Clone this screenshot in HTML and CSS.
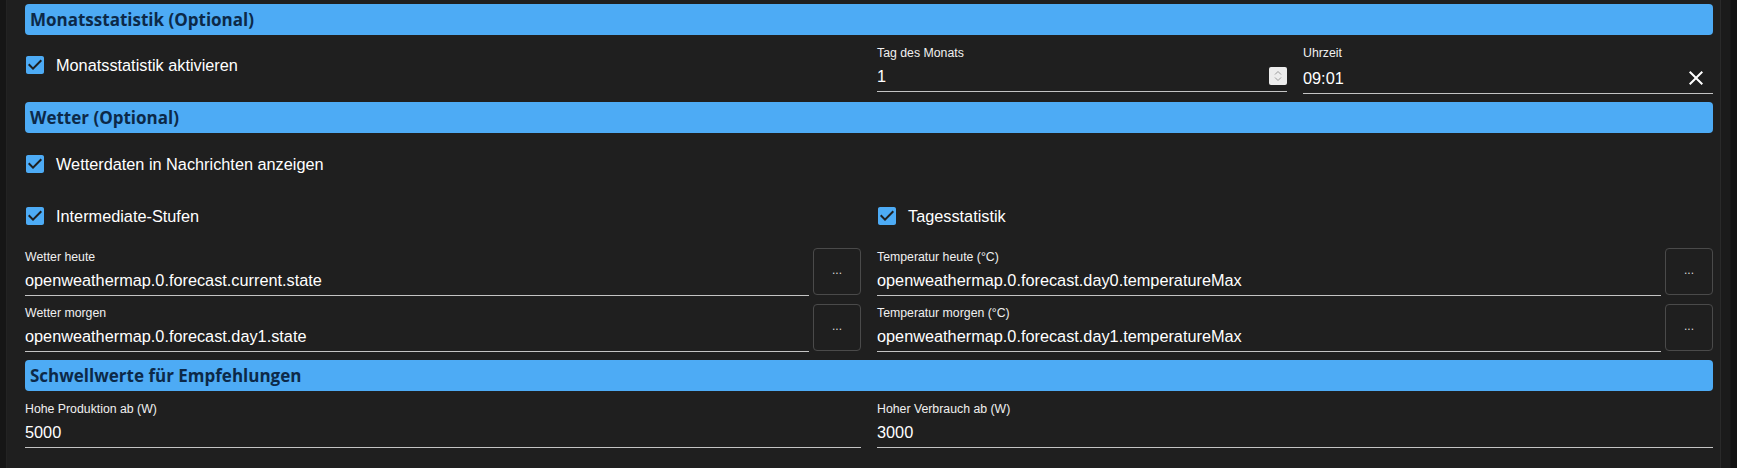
FILE: index.html
```html
<!DOCTYPE html>
<html lang="de">
<head>
<meta charset="utf-8">
<title>Einstellungen</title>
<link rel="stylesheet" href="styles.css">
</head>
<body>
<div class="app">
  <div class="edge-left"></div>
  <main class="content">
    <h2 class="section-title">Monatsstatistik (Optional)</h2>
    <div class="row-month">
      <label class="check">
        <svg class="check-icon" viewBox="0 0 24 24"><path d="M19 3H5c-1.11 0-2 .9-2 2v14c0 1.1.89 2 2 2h14c1.11 0 2-.9 2-2V5c0-1.1-.89-2-2-2zm-9 14l-5-5 1.41-1.41L10 14.17l7.59-7.59L19 8l-9 9z"/></svg>
        <span class="check-text">Monatsstatistik aktivieren</span>
      </label>
      <div class="field">
        <div class="field-label">Tag des Monats</div>
        <div class="field-value">
          <span>1</span>
          <span class="spinner">
            <svg viewBox="0 0 18 18"><path d="M6 7.5 9 4.5 12 7.5M6 10.5 9 13.5 12 10.5" fill="none" stroke="#9a9a9a" stroke-width="1"/></svg>
          </span>
        </div>
      </div>
      <div class="field field-time">
        <div class="field-label">Uhrzeit</div>
        <div class="field-value">
          <span>09:01</span>
          <svg class="clear-icon" viewBox="0 0 24 24"><path d="M19 6.41 17.59 5 12 10.59 6.41 5 5 6.41 10.59 12 5 17.59 6.41 19 12 13.41 17.59 19 19 17.59 13.41 12z"/></svg>
        </div>
      </div>
    </div>

    <h2 class="section-title section-gap">Wetter (Optional)</h2>
    <div class="check-row">
      <label class="check">
        <svg class="check-icon" viewBox="0 0 24 24"><path d="M19 3H5c-1.11 0-2 .9-2 2v14c0 1.1.89 2 2 2h14c1.11 0 2-.9 2-2V5c0-1.1-.89-2-2-2zm-9 14l-5-5 1.41-1.41L10 14.17l7.59-7.59L19 8l-9 9z"/></svg>
        <span class="check-text">Wetterdaten in Nachrichten anzeigen</span>
      </label>
    </div>
    <div class="two-col check-row">
      <label class="check">
        <svg class="check-icon" viewBox="0 0 24 24"><path d="M19 3H5c-1.11 0-2 .9-2 2v14c0 1.1.89 2 2 2h14c1.11 0 2-.9 2-2V5c0-1.1-.89-2-2-2zm-9 14l-5-5 1.41-1.41L10 14.17l7.59-7.59L19 8l-9 9z"/></svg>
        <span class="check-text">Intermediate-Stufen</span>
      </label>
      <label class="check">
        <svg class="check-icon" viewBox="0 0 24 24"><path d="M19 3H5c-1.11 0-2 .9-2 2v14c0 1.1.89 2 2 2h14c1.11 0 2-.9 2-2V5c0-1.1-.89-2-2-2zm-9 14l-5-5 1.41-1.41L10 14.17l7.59-7.59L19 8l-9 9z"/></svg>
        <span class="check-text">Tagesstatistik</span>
      </label>
    </div>
    <div class="two-col fields-grid">
      <div class="picker">
        <div class="field">
          <div class="field-label">Wetter heute</div>
          <div class="field-value"><span>openweathermap.0.forecast.current.state</span></div>
        </div>
        <button class="pick-btn" type="button">...</button>
      </div>
      <div class="picker">
        <div class="field">
          <div class="field-label">Temperatur heute (°C)</div>
          <div class="field-value"><span>openweathermap.0.forecast.day0.temperatureMax</span></div>
        </div>
        <button class="pick-btn" type="button">...</button>
      </div>
      <div class="picker">
        <div class="field">
          <div class="field-label">Wetter morgen</div>
          <div class="field-value"><span>openweathermap.0.forecast.day1.state</span></div>
        </div>
        <button class="pick-btn" type="button">...</button>
      </div>
      <div class="picker">
        <div class="field">
          <div class="field-label">Temperatur morgen (°C)</div>
          <div class="field-value"><span>openweathermap.0.forecast.day1.temperatureMax</span></div>
        </div>
        <button class="pick-btn" type="button">...</button>
      </div>
    </div>

    <h2 class="section-title section-gap">Schwellwerte für Empfehlungen</h2>
    <div class="two-col last-row">
      <div class="field">
        <div class="field-label">Hohe Produktion ab (W)</div>
        <div class="field-value"><span>5000</span></div>
      </div>
      <div class="field">
        <div class="field-label">Hoher Verbrauch ab (W)</div>
        <div class="field-value"><span>3000</span></div>
      </div>
    </div>
  </main>
  <div class="edge-right"></div>
</div>
</body>
</html>
```

FILE: styles.css
```css
* { box-sizing: border-box; }

html, body {
  margin: 0;
  height: 100%;
  background: #1f1f1f;
}

body {
  font-family: "Liberation Sans", Arial, sans-serif;
  color: #ffffff;
  overflow: hidden;
}

.app {
  display: flex;
  width: 1737px;
  height: 468px;
}

.edge-left {
  width: 7px;
  background: #161616;
  border-right: 1px solid #232323;
}

.edge-right {
  width: 17px;
  background: linear-gradient(to right, #1b1b1b 0, #1b1b1b 9px, #121212 10px);
  border-left: 1px solid #2a2a2a;
}

.content {
  flex: 1;
  padding: 4px 7px 0 18px;
}

.section-title {
  margin: 0;
  height: 31px;
  line-height: 31px;
  padding: 0 5px;
  background: #4dabf5;
  border-radius: 4px;
  color: #0c2948;
  font-family: "Open Sans", "Liberation Sans", sans-serif;
  font-weight: 700;
  font-size: 17px;
  white-space: nowrap;
}

.section-gap { margin-top: 8px; }

.row-month {
  display: grid;
  grid-template-columns: calc((100% - 16px) / 2) 1fr 1fr;
  column-gap: 16px;
  align-items: start;
  margin-top: 9px;
}

.two-col {
  display: grid;
  grid-template-columns: 1fr 1fr;
  column-gap: 16px;
}

.check-row { margin-top: 10px; }

.check {
  display: flex;
  align-items: center;
  height: 42px;
  margin-left: -2px;
  gap: 9px;
}

.check-icon {
  width: 24px;
  height: 24px;
  fill: #4dabf5;
  flex: none;
}

.check-text {
  font-size: 16.3px;
  color: #ffffff;
  white-space: nowrap;
}

.field {
  display: flex;
  flex-direction: column;
  padding-top: 2px;
  border-bottom: 1px solid #c4c4c4;
  min-width: 0;
}

.field-label {
  font-size: 12.3px;
  line-height: 14px;
  color: #f0f0f0;
  white-space: nowrap;
}

.field-value {
  display: flex;
  align-items: center;
  justify-content: space-between;
  margin-top: 6px;
  height: 20px;
  margin-bottom: 5px;
  font-size: 16.3px;
  line-height: 20px;
  color: #ffffff;
  white-space: nowrap;
}

.spinner {
  width: 18px;
  height: 18px;
  background: #ececec;
  border-radius: 2px;
  display: flex;
}

.spinner svg { width: 18px; height: 18px; }

.field-time .field-value {
  height: 24px;
  line-height: 24px;
  margin-bottom: 3px;
}

.clear-icon {
  width: 24px;
  height: 24px;
  fill: #ffffff;
  margin-right: 5px;
}

.fields-grid {
  margin-top: 11px;
  row-gap: 8px;
}

.picker {
  display: flex;
  gap: 4px;
  align-items: flex-start;
}

.picker .field { flex: 1; }

.pick-btn {
  width: 48px;
  height: 47px;
  flex: none;
  background: transparent;
  border: 1px solid #4a4a4a;
  border-radius: 4px;
  color: #d8d8d8;
  font-family: "Liberation Sans", Arial, sans-serif;
  font-size: 12px;
  line-height: 1;
  padding: 0 0 4px;
}

.last-row { margin-top: 9px; }
```
